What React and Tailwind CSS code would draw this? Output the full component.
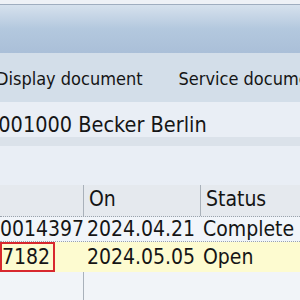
export default function App() {
  const font = { fontFamily: '"DejaVu Sans Condensed", "DejaVu Sans", sans-serif' };
  return (
    <div className="w-[300px] h-[300px] overflow-hidden bg-[#e9eef5] text-[#151515]" style={font}>
      {/* window title strip */}
      <div className="h-[4px] bg-[#eef1f6]" />
      <div className="h-[1px] bg-[#9fadbf]" />
      <div className="h-[48px] bg-gradient-to-b from-[#d6e1ed] via-[#b3c8de] to-[#aabfd8]" />

      {/* application toolbar */}
      <div className="h-[49px] bg-[#d3dee9] flex items-center whitespace-nowrap text-[18px] pt-[1px]">
        <span className="ml-[-4px]">Display document</span>
        <span className="ml-[36px]">Service document</span>
      </div>

      {/* header data */}
      <div className="h-[35px] flex items-end whitespace-nowrap text-[21.5px] leading-none pb-[2px]">
        <span className="ml-[-14px]">0001000 Becker Berlin</span>
      </div>
      <div className="h-[9px] bg-[#dbe2ea]" />
      <div className="h-[39px]" />

      {/* table */}
      <div className="text-[21px] leading-none whitespace-nowrap">
        <div className="flex h-[32px] bg-[#e5e9ee] border-b border-dotted border-[#9aa3ad]">
          <div className="w-[84px] border-r border-[#a9b1ba]" />
          <div className="w-[117px] border-r border-[#a9b1ba] flex items-end pb-[6px] pl-[5px]">On</div>
          <div className="flex-1 flex items-end pb-[6px] pl-[5px]">Status</div>
        </div>
        <div className="flex h-[25px] bg-[#f1f5fa] border-b border-dotted border-[#9aa3ad] items-center">
          <div className="w-[84px] text-right pr-[4px]">0014397</div>
          <div className="w-[117px] pl-[3px]">2024.04.21</div>
          <div className="flex-1 pl-[2px]">Complete</div>
        </div>
        <div className="flex h-[30px] bg-[#fdfbd0] items-stretch">
          <div className="w-[84px] flex">
            <div className="w-[55px] border-2 border-[#d8282e] flex items-center">7182</div>
          </div>
          <div className="w-[117px] pl-[3px] flex items-center">2024.05.05</div>
          <div className="flex-1 pl-[2px] flex items-center">Open</div>
        </div>
        <div className="flex h-[40px] bg-[#f1f4f8]">
          <div className="w-[84px] border-r border-[#a9b1ba]" />
        </div>
      </div>
    </div>
  );
}
